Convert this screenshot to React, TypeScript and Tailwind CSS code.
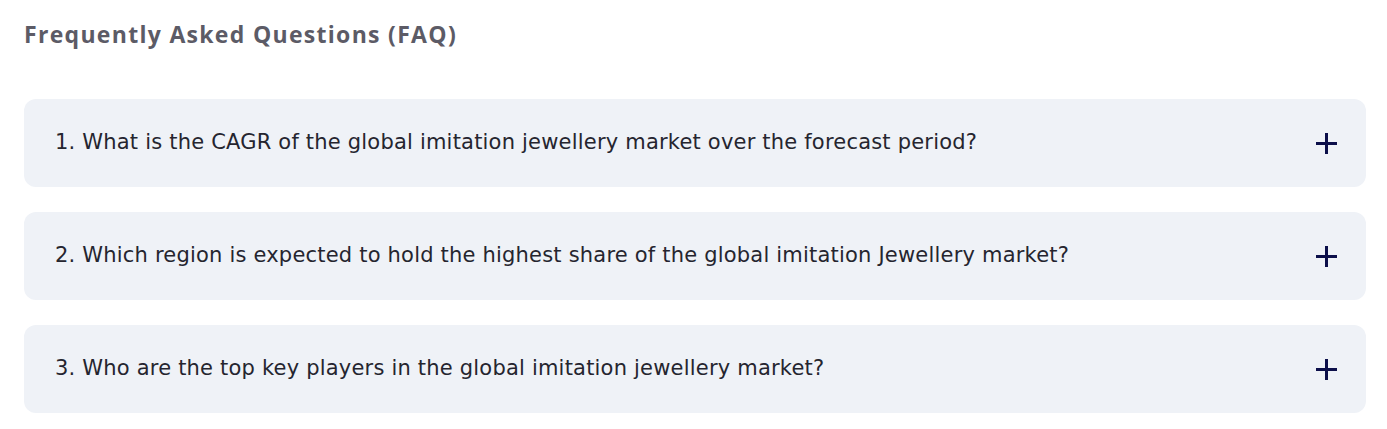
import React from "react";

const questions = [
  "1. What is the CAGR of the global imitation jewellery market over the forecast period?",
  "2. Which region is expected to hold the highest share of the global imitation Jewellery market?",
  "3. Who are the top key players in the global imitation jewellery market?",
];

export default function App() {
  return (
    <div className="w-[1387px] h-[429px] bg-white px-[24px] pt-[18px]">
      <h2
        className="text-[23px] leading-[32px] font-bold text-[#5c5b66] tracking-[1.3px]"
        style={{ fontFamily: '"Open Sans", sans-serif' }}
      >
        Frequently Asked Questions (FAQ)
      </h2>
      <div className="mt-[49px] flex flex-col gap-[25px] w-[1342px]">
        {questions.map((q) => (
          <div
            key={q}
            className="h-[88px] rounded-[12px] bg-[#eff2f7] flex items-center justify-between pl-[31px] pr-[29px]"
          >
            <span
              className="text-[21px] tracking-[0.2px] text-[#25252f]"
              style={{ fontFamily: '"DejaVu Sans", sans-serif' }}
            >
              {q}
            </span>
            <svg width="21" height="21" viewBox="0 0 21 21" className="shrink-0">
              <path d="M10.5 0v21M0 10.5h21" stroke="#0c0f4a" strokeWidth="3" />
            </svg>
          </div>
        ))}
      </div>
    </div>
  );
}
